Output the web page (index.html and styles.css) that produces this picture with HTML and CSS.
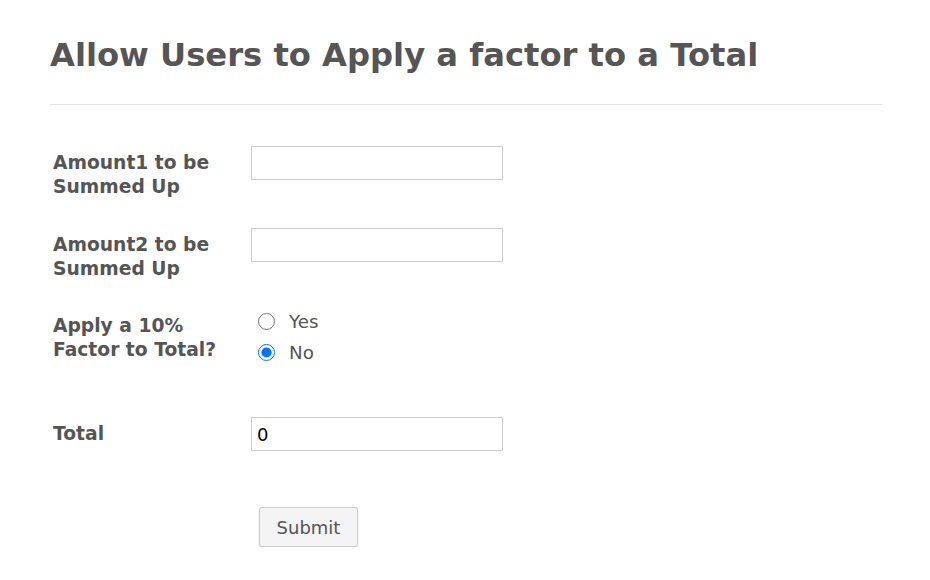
FILE: index.html
```html
<!DOCTYPE html>
<html lang="en">
<head>
  <meta charset="UTF-8">
  <title>Apply a factor to a Total</title>
  <meta name="viewport" content="width=device-width, initial-scale=1.0">
  <link rel="stylesheet" href="styles.css">
</head>
<body>
  <form class="form">
    <!-- Header -->
    <div class="header">
      <h1>Allow Users to Apply a factor to a Total</h1>
    </div>

    <div class="row row-first">
      <label class="label" for="amount1">Amount1 to be Summed Up</label>
      <input class="text-input" type="text" id="amount1">
    </div>

    <div class="row">
      <label class="label" for="amount2">Amount2 to be Summed Up</label>
      <input class="text-input" type="text" id="amount2">
    </div>

    <div class="row row-radio">
      <span class="label">Apply a 10% Factor to Total?</span>
      <div class="radios">
        <label class="radio"><input type="radio" name="factor" value="yes"> Yes</label>
        <label class="radio"><input type="radio" name="factor" value="no" checked> No</label>
      </div>
    </div>

    <div class="row row-total">
      <label class="label" for="total">Total</label>
      <input class="text-input" type="text" id="total" value="0">
    </div>

    <div class="row row-submit">
      <button class="submit" type="button">Submit</button>
    </div>
  </form>
</body>
</html>
```

FILE: styles.css
```css
* {
  box-sizing: border-box;
  font-family: "DejaVu Sans", Verdana, sans-serif;
}

body {
  margin: 0;
  background: white;
  color: #555;
}

.form {
  width: 832px;
  margin-left: 50px;
  padding-top: 37px;
}

.header {
  border-bottom: 1px solid #e6e6e6;
  padding-bottom: 30px;
}

.header h1 {
  margin: 0;
  font-size: 32.2px;
  font-weight: bold;
  line-height: 37px;
  color: #555;
}

.row {
  display: flex;
  align-items: flex-start;
  margin-top: 29px;
}

.row-first {
  margin-top: 41px;
}

.label {
  width: 201px;
  padding: 5px 10px 0 3px;
  font-size: 18.7px;
  font-weight: bold;
  line-height: 24px;
}

.text-input {
  width: 252px;
  height: 34px;
  border: 1px solid #ccc;
  padding: 4px 5px;
  font-size: 18px;
  color: black;
  outline: none;
}

.radios {
  display: flex;
  flex-direction: column;
  margin: -3px 0 0 6px;
}

.radio {
  display: flex;
  align-items: center;
  height: 31px;
  font-size: 18.3px;
  color: #555;
}

.radio input {
  width: 17px;
  height: 17px;
  margin: 0 14px 0 1px;
}

.row-radio {
  margin-top: 28px;
}

.row-total {
  margin-top: 49px;
}

.row-submit {
  margin-top: 56px;
  padding-left: 209px;
}

.submit {
  width: 99px;
  height: 40px;
  background: #f4f4f4;
  border: 1px solid #ccc;
  border-radius: 3px;
  box-shadow: 0 1px 2px rgba(0,0,0,0.15);
  font-size: 18px;
  color: #555;
  cursor: pointer;
}
```
